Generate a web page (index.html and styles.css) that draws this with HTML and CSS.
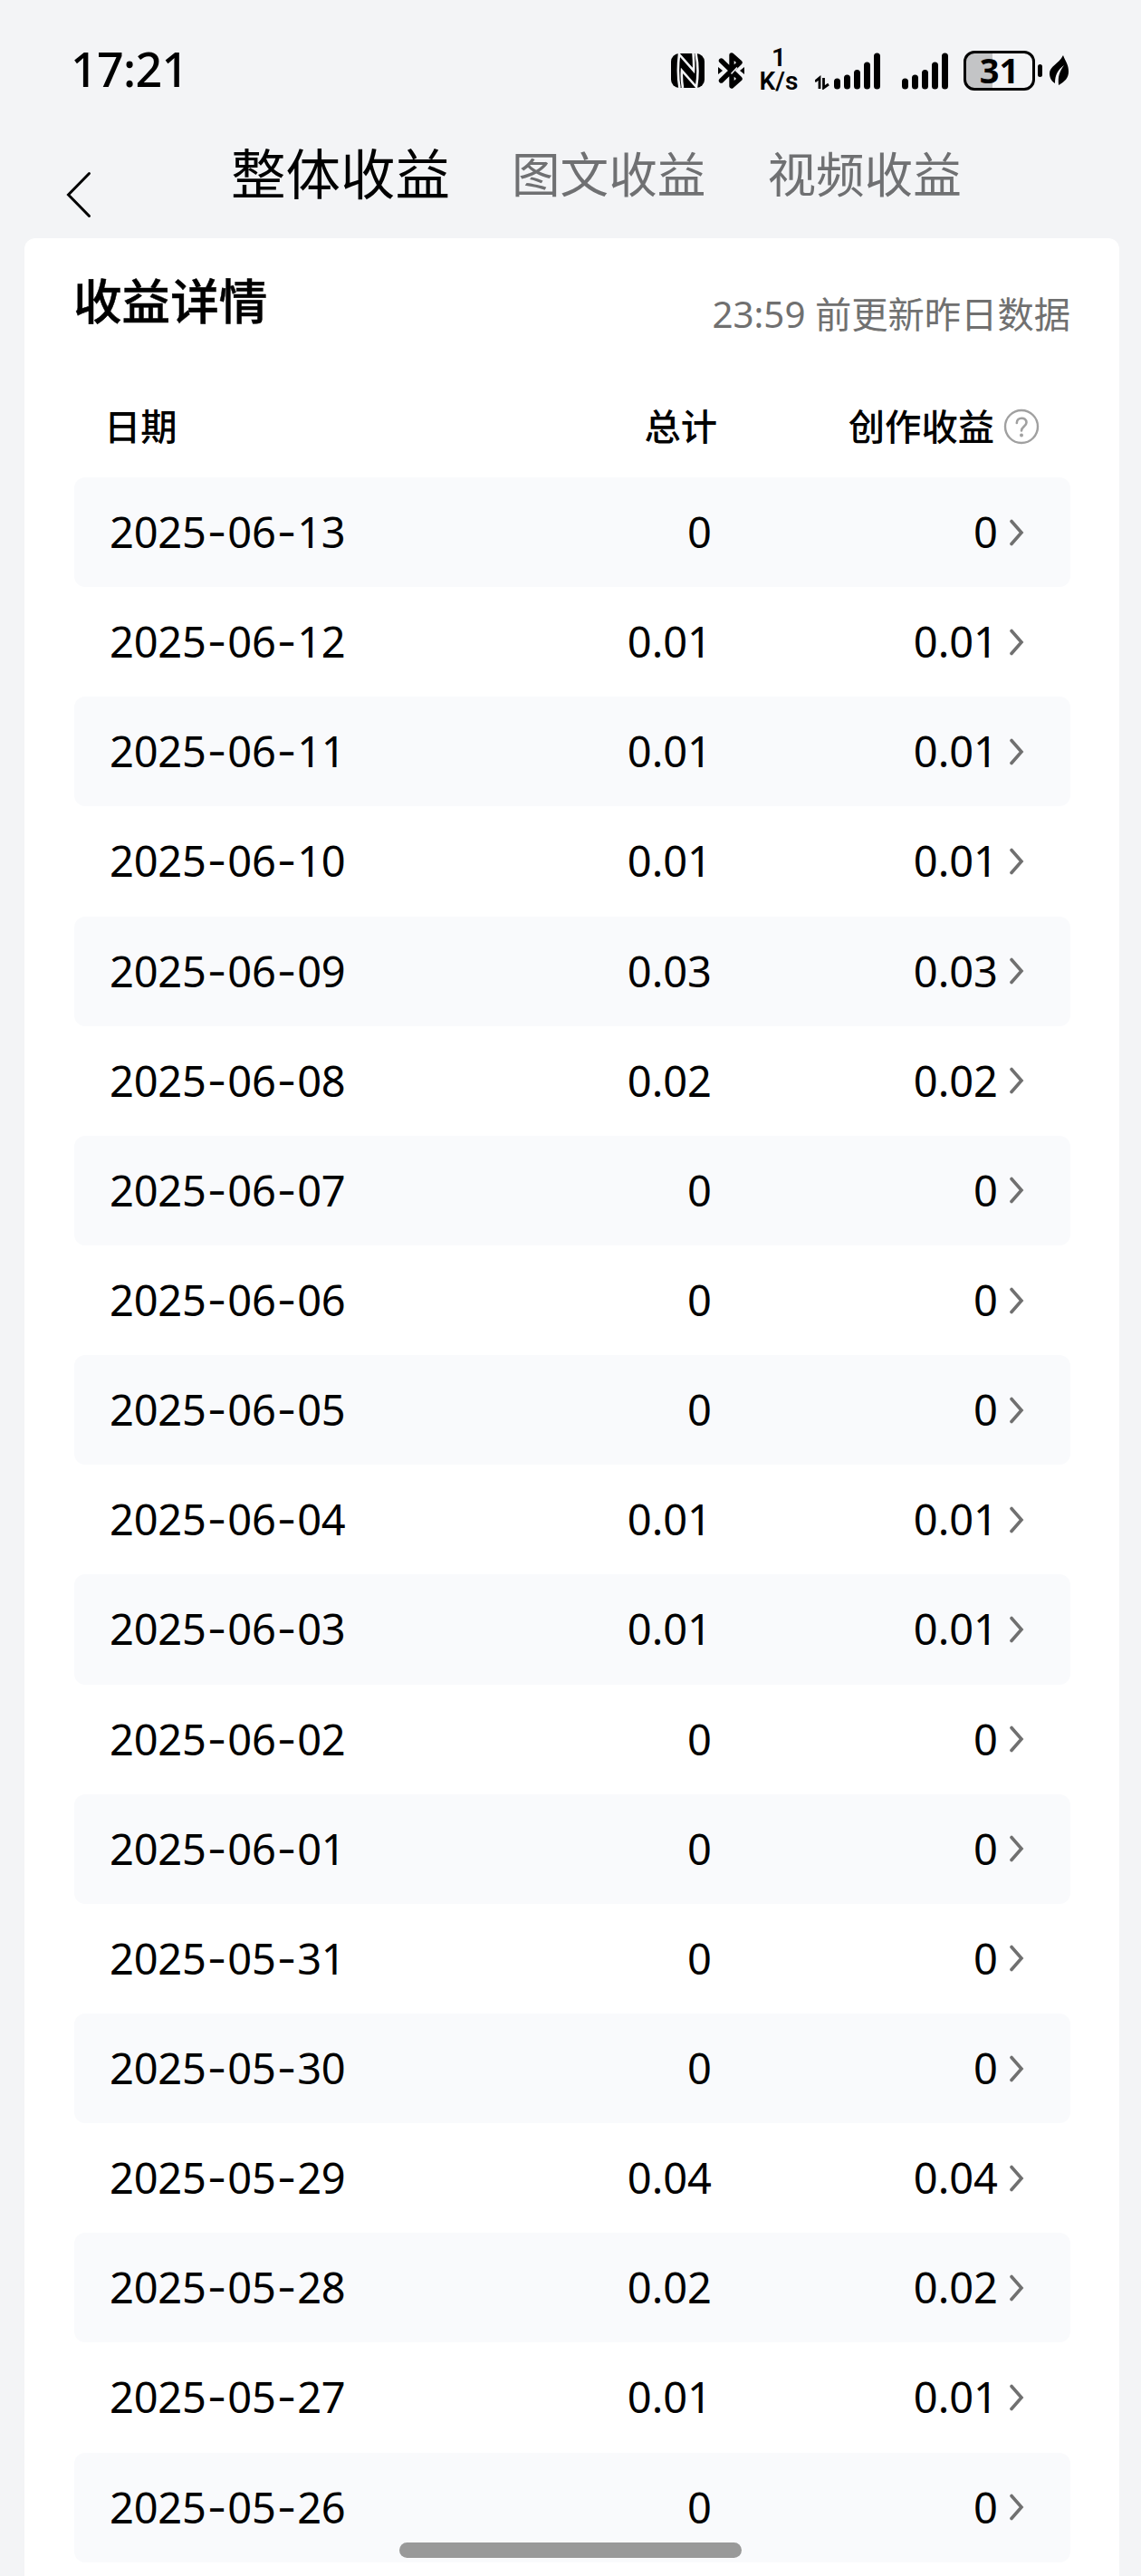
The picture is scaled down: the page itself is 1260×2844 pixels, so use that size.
FILE: index.html
```html
<!DOCTYPE html>
<html lang="zh-CN">
<head>
  <meta charset="UTF-8" />
  <meta name="viewport" content="width=device-width, initial-scale=1" />
  <title>收益详情</title>
  <link rel="stylesheet" href="styles.css">
</head>
<body>

  <!-- Status bar -->
  <div class="status-bar">
    <span class="clock">17:21</span>
    <div class="status-icons">
      <svg class="nfc" width="37" height="38" viewBox="0 0 37 38">
        <rect width="37" height="38" rx="9" fill="#000"/>
        <path d="M9.5 38 C7.500 27 7.500 13 9 1 L25 19 C25.500 12 25 6 24.500 0 M27.500 0 C30 12 30 25 28 37 L12 19 C11.500 26 12 32 13 38" fill="none" stroke="#f3f4f6" stroke-width="2.6"/>
      </svg>
      <svg class="bluetooth" width="30" height="42" viewBox="0 0 30 42">
        <path d="M3.500 10 L24 30 L15 38 V4 L24 12 L3.500 32" fill="none" stroke="#000" stroke-width="5.400" stroke-linejoin="round" stroke-linecap="round"/>
        <path d="M14.500 24.500 L21 17.500" stroke="#f3f4f6" stroke-width="1.500"/>
        <path d="M0 17 L5 21 L0 25Z M29 17 L24 21 L29 25Z" fill="#000"/>
      </svg>
      <div class="speed"><span>1</span><span class="unit">K/s</span></div>
      <svg class="signal-data" width="73" height="41" viewBox="0 0 73 41">
        <path d="M0 32 L5 28 V40 M9.500 28 V39 L15 35" fill="none" stroke="#000" stroke-width="2.800"/>
        <path d="M24.500 32 V37 M35.500 28 V37 M46.500 22.500 V37 M57.500 14 V37 M68.500 4 V37" stroke="#000" stroke-width="7" stroke-linecap="round"/>
      </svg>
      <svg class="signal" width="52" height="41" viewBox="0 0 52 41">
        <path d="M3.500 32 V37 M14.500 28 V37 M25.500 22.500 V37 M36.500 14 V37 M47.500 4 V37" stroke="#000" stroke-width="7" stroke-linecap="round"/>
      </svg>
      <div class="battery">31</div>
      <span class="battery-cap"></span>
      <svg class="leaf" width="22" height="34" viewBox="0 0 22 34">
        <path d="M15 0 C18 8 21 10 21 18 C21 25 17 29 10 33 C9 23 11 18 16 11 C9 16 6 22 6 31 C1 28 0 23 0 20 C0 12 10 10 15 0Z" fill="#000"/>
      </svg>
    </div>
  </div>

  <!-- Top tabs -->
  <div class="nav">
    <svg class="back" width="28" height="52" viewBox="0 0 28 52">
      <path d="M25.500 2.500 L2.500 26 L25.500 49.500" fill="none" stroke="#000" stroke-width="3" stroke-linecap="round"/>
    </svg>
    <div class="tabs">
      <span class="tab active">整体收益</span>
      <span class="tab">图文收益</span>
      <span class="tab">视频收益</span>
    </div>
  </div>

  <div class="card">
    <div class="card-head">
      <h2>收益详情</h2>
      <span class="update-tip">23:59 前更新昨日数据</span>
    </div>
    <div class="table-head">
      <span class="col-date">日期</span>
      <span class="col-total">总计</span>
      <span class="col-income">创作收益</span>
      <svg class="help" width="40" height="40" viewBox="0 0 40 40">
        <circle cx="20" cy="20" r="18" fill="none" stroke="#a0a0a0" stroke-width="2.400"/>
        <path d="M14.800 16 C14.800 9 25.500 9 25.500 15.500 C25.500 19.500 20 20 20 24.500" fill="none" stroke="#a0a0a0" stroke-width="2.600" stroke-linecap="round"/>
        <circle cx="20" cy="29.500" r="2" fill="#a0a0a0"/>
      </svg>
    </div>
    <div id="incomeList"></div>
  </div>

  <div class="home-bar"></div>

  <script>
    const records = [
      ['2025-06-13', '0'],
      ['2025-06-12', '0.01'],
      ['2025-06-11', '0.01'],
      ['2025-06-10', '0.01'],
      ['2025-06-09', '0.03'],
      ['2025-06-08', '0.02'],
      ['2025-06-07', '0'],
      ['2025-06-06', '0'],
      ['2025-06-05', '0'],
      ['2025-06-04', '0.01'],
      ['2025-06-03', '0.01'],
      ['2025-06-02', '0'],
      ['2025-06-01', '0'],
      ['2025-05-31', '0'],
      ['2025-05-30', '0'],
      ['2025-05-29', '0.04'],
      ['2025-05-28', '0.02'],
      ['2025-05-27', '0.01'],
      ['2025-05-26', '0']
    ];

    let output = '';
    records.forEach(([date, amount]) => {
      output += `
        <div class="row">
          <span class="date">${date.replace(/-/g, '<i>-</i>')}</span>
          <span class="total">${amount}</span>
          <span class="income">${amount}</span>
          <svg class="arrow" width="16" height="30" viewBox="0 0 16 30">
            <path d="M2 2.500 L13 15 L2 27.500" fill="none" stroke="#707070" stroke-width="3.600" stroke-linecap="round"/>
          </svg>
        </div>`;
    });
    document.getElementById('incomeList').innerHTML = output;
  </script>

</body>
</html>
```
FILE: styles.css
```css
* {
  box-sizing: border-box;
}
body {
  margin: 0;
  height: 2844px;
  overflow: hidden;
  background: #f3f4f6;
  color: #000;
  font-family: "Noto Sans", "Noto Sans CJK SC", sans-serif;
}
svg {
  display: block;
  flex: none;
}

/* Status bar */
.status-bar {
  display: flex;
  justify-content: space-between;
  height: 130px;
  padding: 0 79px 0 78px;
}
.clock {
  margin-top: 41px;
  font-size: 52px;
  line-height: 70px;
  font-weight: 500;
  letter-spacing: -0.7px;
}
.status-icons {
  display: flex;
  align-items: center;
  height: 156px;
}
.bluetooth {
  margin-left: 15px;
}
.speed {
  display: flex;
  flex-direction: column;
  align-items: center;
  width: 44px;
  margin: -3px 0 0 15px;
  font-family: Roboto, sans-serif;
  font-size: 28px;
  line-height: 26px;
  font-weight: 600;
}
.signal-data {
  margin-left: 18px;
}
.signal {
  margin-left: 23px;
}
.battery {
  width: 79px;
  height: 44px;
  margin-left: 16px;
  border: 3px solid #000;
  border-radius: 12px;
  background: linear-gradient(90deg, #c3c4c6 29px, transparent 29px);
  font-size: 38px;
  line-height: 37px;
  font-weight: 700;
  text-align: center;
}
.battery-cap {
  width: 5px;
  height: 14px;
  margin: 0 8px 0 3px;
  border-radius: 3px;
  background: #000;
}

/* Tabs */
.nav {
  display: flex;
  height: 133px;
  padding-left: 73px;
}
.back {
  margin-top: 59px;
}
.tabs {
  display: flex;
  align-items: baseline;
  margin-left: 154px;
  padding-top: 2px;
}
.tab {
  margin: -2px 68px 0 0;
  color: #6f7072;
  font-size: 53.600px;
  line-height: 116px;
  white-space: nowrap;
  position: relative;
  top: -2px;
}
.tab.active {
  top: 0;
  color: #000;
  font-size: 60.500px;
  line-height: 124px;
}

/* Income table */
.card {
  height: 2600px;
  margin: 0 24px 0 27px;
  padding: 0 54px 0 55px;
  border-radius: 12px 12px 0 0;
  background: #fff;
}
.card-head {
  display: flex;
  justify-content: space-between;
  height: 160px;
}
.card-head h2 {
  margin: 32px 0 0 -1px;
  font-size: 53.600px;
  line-height: 76px;
  font-weight: 500;
  -webkit-text-stroke: 0.5px #000;
}
.update-tip {
  margin-top: 54px;
  color: #707070;
  font-size: 40.300px;
  line-height: 60px;
}
.table-head {
  display: flex;
  align-items: center;
  height: 104px;
  padding: 0 34px 9px 33px;
  font-size: 40.300px;
  line-height: 60px;
  font-weight: 500;
}
.col-date {
  width: 400px;
}
.col-total {
  width: 277px;
  text-align: right;
}
.col-income {
  width: 306px;
  text-align: right;
}
.help {
  margin: 0 0 0 10px;
}
.row {
  display: flex;
  align-items: center;
  height: 121.150px;
  padding: 0 0 1px 39px;
  border-radius: 12px;
  font-size: 47px;
  line-height: 64px;
}
.row:nth-child(odd) {
  background: #f9fafc;
}
.date {
  width: 400px;
  letter-spacing: -0.200px;
}
.date i {
  display: inline-block;
  width: 23.500px;
  font-family: Inter, sans-serif;
  font-style: normal;
  line-height: 1;
  text-align: center;
}
.total {
  width: 265px;
  text-align: right;
}
.income {
  width: 316px;
  text-align: right;
}
.arrow {
  margin: 1px 0 0 13px;
}

.home-bar {
  position: fixed;
  left: 441px;
  bottom: 20px;
  width: 378px;
  height: 17px;
  border-radius: 9px;
  background: #999;
}
```
